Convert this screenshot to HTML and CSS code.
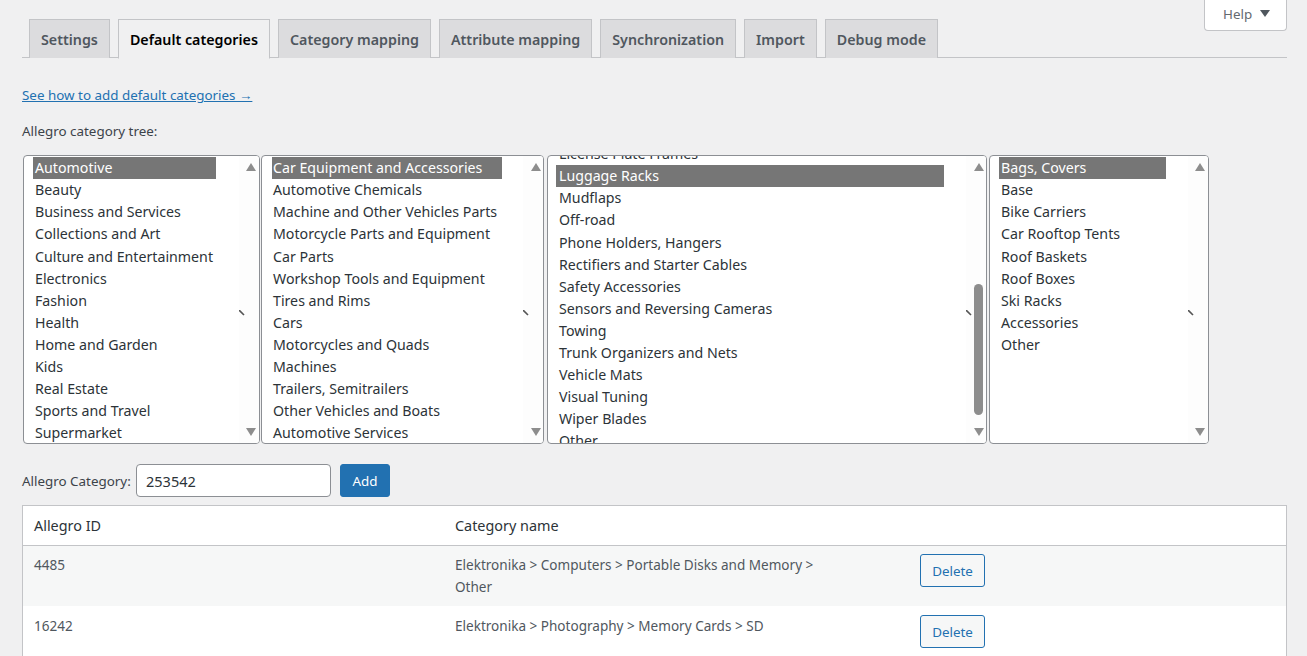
FILE: index.html
```html
<!DOCTYPE html>
<html lang="en">
<head>
<meta charset="utf-8">
<title>Default categories</title>
<link rel="stylesheet" href="styles.css">
</head>
<body>
<div class="page">
  <div class="help-row">
    <div class="help"><span>Help</span><svg class="help-arrow" width="10" height="7" viewBox="0 0 10 7"><path d="M0 0h10L5 7z"/></svg></div>
  </div>
  <nav class="tabs">
    <a class="tab">Settings</a>
    <a class="tab active">Default categories</a>
    <a class="tab">Category mapping</a>
    <a class="tab">Attribute mapping</a>
    <a class="tab">Synchronization</a>
    <a class="tab">Import</a>
    <a class="tab">Debug mode</a>
  </nav>
  <p class="guide"><a href="#">See how to add default categories →</a></p>
  <p class="tree-label">Allegro category tree:</p>
  <div class="lists">
    <div class="list l1">
      <div class="options">
        <div class="opt sel">Automotive</div>
        <div class="opt">Beauty</div>
        <div class="opt">Business and Services</div>
        <div class="opt">Collections and Art</div>
        <div class="opt">Culture and Entertainment</div>
        <div class="opt">Electronics</div>
        <div class="opt">Fashion</div>
        <div class="opt">Health</div>
        <div class="opt">Home and Garden</div>
        <div class="opt">Kids</div>
        <div class="opt">Real Estate</div>
        <div class="opt">Sports and Travel</div>
        <div class="opt">Supermarket</div>
      </div>
      <div class="track"><svg class="up" width="10" height="8" viewBox="0 0 10 8"><path d="M5 0l5 8H0z"/></svg><svg class="down" width="10" height="8" viewBox="0 0 10 8"><path d="M0 0h10L5 8z"/></svg></div>
      <svg class="tick" width="6" height="6" viewBox="0 0 6 6"><path d="M0 0l5 5" /></svg>
    </div>
    <div class="list l2">
      <div class="options">
        <div class="opt sel">Car Equipment and Accessories</div>
        <div class="opt">Automotive Chemicals</div>
        <div class="opt">Machine and Other Vehicles Parts</div>
        <div class="opt">Motorcycle Parts and Equipment</div>
        <div class="opt">Car Parts</div>
        <div class="opt">Workshop Tools and Equipment</div>
        <div class="opt">Tires and Rims</div>
        <div class="opt">Cars</div>
        <div class="opt">Motorcycles and Quads</div>
        <div class="opt">Machines</div>
        <div class="opt">Trailers, Semitrailers</div>
        <div class="opt">Other Vehicles and Boats</div>
        <div class="opt">Automotive Services</div>
      </div>
      <div class="track"><svg class="up" width="10" height="8" viewBox="0 0 10 8"><path d="M5 0l5 8H0z"/></svg><svg class="down" width="10" height="8" viewBox="0 0 10 8"><path d="M0 0h10L5 8z"/></svg></div>
      <svg class="tick" width="6" height="6" viewBox="0 0 6 6"><path d="M0 0l5 5" /></svg>
    </div>
    <div class="list l3">
      <div class="options scrolled">
        <div class="opt">License Plate Frames</div>
        <div class="opt sel">Luggage Racks</div>
        <div class="opt">Mudflaps</div>
        <div class="opt">Off-road</div>
        <div class="opt">Phone Holders, Hangers</div>
        <div class="opt">Rectifiers and Starter Cables</div>
        <div class="opt">Safety Accessories</div>
        <div class="opt">Sensors and Reversing Cameras</div>
        <div class="opt">Towing</div>
        <div class="opt">Trunk Organizers and Nets</div>
        <div class="opt">Vehicle Mats</div>
        <div class="opt">Visual Tuning</div>
        <div class="opt">Wiper Blades</div>
        <div class="opt">Other</div>
      </div>
      <div class="track"><svg class="up" width="10" height="8" viewBox="0 0 10 8"><path d="M5 0l5 8H0z"/></svg><div class="thumb"></div><svg class="down" width="10" height="8" viewBox="0 0 10 8"><path d="M0 0h10L5 8z"/></svg></div>
      <svg class="tick" width="6" height="6" viewBox="0 0 6 6"><path d="M0 0l5 5" /></svg>
    </div>
    <div class="list l4">
      <div class="options">
        <div class="opt sel">Bags, Covers</div>
        <div class="opt">Base</div>
        <div class="opt">Bike Carriers</div>
        <div class="opt">Car Rooftop Tents</div>
        <div class="opt">Roof Baskets</div>
        <div class="opt">Roof Boxes</div>
        <div class="opt">Ski Racks</div>
        <div class="opt">Accessories</div>
        <div class="opt">Other</div>
      </div>
      <div class="track"><svg class="up" width="10" height="8" viewBox="0 0 10 8"><path d="M5 0l5 8H0z"/></svg><svg class="down" width="10" height="8" viewBox="0 0 10 8"><path d="M0 0h10L5 8z"/></svg></div>
      <svg class="tick" width="6" height="6" viewBox="0 0 6 6"><path d="M0 0l5 5" /></svg>
    </div>
  </div>
  <div class="add-row">
    <label class="add-label" for="cat">Allegro Category:</label>
    <input class="add-input" id="cat" type="text" value="253542">
    <button class="btn-primary">Add</button>
  </div>
  <table class="cats">
    <thead>
      <tr><th class="c1">Allegro ID</th><th class="c2">Category name</th><th class="c3"></th></tr>
    </thead>
    <tbody>
      <tr class="alt">
        <td>4485</td>
        <td class="name">Elektronika &gt; Computers &gt; Portable Disks and Memory &gt; Other</td>
        <td class="act"><button class="btn-del">Delete</button></td>
      </tr>
      <tr class="plain">
        <td>16242</td>
        <td class="name">Elektronika &gt; Photography &gt; Memory Cards &gt; SD</td>
        <td class="act"><button class="btn-del hover">Delete</button></td>
      </tr>
    </tbody>
  </table>
</div>
</body>
</html>
```
FILE: styles.css
```css
* { box-sizing: border-box; }
html, body { margin: 0; height: 656px; overflow: hidden; background: #f0f0f1; }
body { font-family: "Noto Sans", "Open Sans", sans-serif; font-size: 13.4px; color: #3c434a; }
.page { padding: 0 20px 0 22px; }

.help-row { display: flex; justify-content: flex-end; height: 0; }
.help { flex: none; width: 83px; height: 31px; background: #fff; border: 1px solid #c3c4c7; border-top: 0; border-radius: 0 0 4px 4px; color: #646970; display: flex; align-items: center; padding: 0 0 3px 18px; gap: 8px; }
.help-arrow { fill: #50575e; }

.tabs { display: flex; padding: 19px 0 0 7px; gap: 8px; border-bottom: 1px solid #c3c4c7; height: 58px; margin: 0; }
.tab { height: 39px; padding: 0 11px; background: #dcdcde; border: 1px solid #c3c4c7; border-bottom: 0; font-size: 14.28px; font-weight: 600; color: #50575e; line-height: 40px; white-space: nowrap; }
.tab.active { background: #f0f0f1; color: #000; height: 40px; border-bottom: 1px solid #f0f0f1; }

.guide { margin: 28px 0 0; height: 18px; line-height: 18px; }
.guide a { color: #2271b1; }
.tree-label { margin: 18px 0 0; height: 18px; line-height: 18px; }

.lists { display: flex; margin: 15px 0 0 1px; height: 289px; }
.list { position: relative; display: flex; height: 289px; background: #fff; border: 1px solid #8c8f94; border-radius: 4px; overflow: hidden; font-size: 14.2px; color: #2c3338; }
.l1 { width: 237px; margin-right: 1px; }
.l2 { width: 283px; margin-right: 3px; }
.l3 { width: 440px; margin-right: 2px; }
.l4 { width: 220px; }
.options { flex: 1; min-width: 0; padding: 1.2px 23px 0 9px; }
.l2 .options { padding-left: 10px; padding-right: 21px; }
.l4 .options { padding-right: 22px; }
.l3 .options { padding-left: 8px; padding-right: 22px; }
.options.scrolled { margin-top: -12.8px; padding-top: 0; }
.opt { height: 22.08px; line-height: 22px; padding-left: 2px; white-space: nowrap; }
.l2 .opt { padding-left: 1px; }
.l3 .opt { padding-left: 3px; }
.opt.sel { background: #767676; color: #fff; }
.track { flex: none; width: 20px; position: relative; background: #fdfdfd; }
.up, .down { position: absolute; left: 7px; fill: #8d8d8d; }
.l2 .up, .l2 .down, .l3 .up, .l3 .down { left: 8px; }
.up { top: 7px; }
.down { bottom: 7px; }
.thumb { position: absolute; left: 8px; top: 128px; width: 9px; height: 131px; background: #8d8d8d; border-radius: 5px; }
.tick { position: absolute; right: 14px; top: 154px; stroke: #555; stroke-width: 1.6; fill: none; }

.add-row { display: flex; align-items: center; margin-top: 20px; height: 33px; }
.add-label { width: 114px; flex: none; }
.add-input { width: 195px; height: 33px; padding: 0 9px; border: 1px solid #8c8f94; border-radius: 4px; background: #fff; font: 14.5px "Noto Sans", sans-serif; color: #2c3338; }
.btn-primary { margin-left: 9px; width: 50px; height: 33px; background: #2271b1; border: 1px solid #2271b1; border-radius: 3px; color: #fff; font: 13.4px "Noto Sans", sans-serif; padding: 0; }

.cats { margin-top: 8px; width: 1265px; table-layout: fixed; border-collapse: separate; border-spacing: 0; background: #fff; border: 1px solid #c3c4c7; }
.c1 { width: 421px; }
.c2 { width: 465px; }
.cats th { height: 40px; padding: 0 11px; font-size: 14.4px; font-weight: 400; color: #2c3338; text-align: left; border-bottom: 1px solid #c3c4c7; }
.cats td { padding: 8px 11px; line-height: 22px; vertical-align: top; color: #50575e; font-size: 13.55px; }
.cats td.name { padding-right: 60px; }
.alt td { background: #f6f7f7; }
.plain td { padding-top: 9px; padding-bottom: 30px; }
.cats td.act { padding-bottom: 0; }
.btn-del { display: block; width: 65px; height: 33px; padding: 0; background: transparent; border: 1px solid #2271b1; border-radius: 3px; color: #2271b1; font: 13.4px "Noto Sans", sans-serif; }
.btn-del.hover { background: #f6f7f7; }
```
